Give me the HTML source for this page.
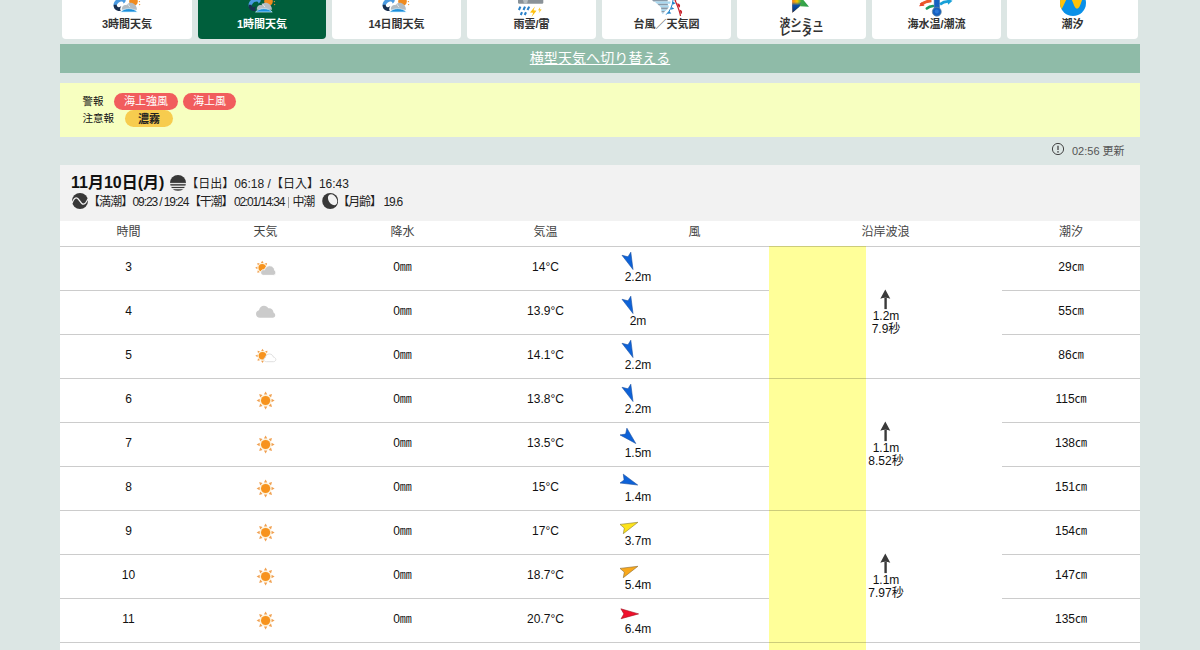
<!DOCTYPE html>
<html lang="ja"><head><meta charset="utf-8"><title>1時間天気</title>
<style>
*{margin:0;padding:0;box-sizing:border-box}
html,body{width:1200px;height:650px;overflow:hidden}
body{background:#dce6e4;font-family:"Liberation Sans", "Noto Sans CJK JP", sans-serif;font-size:12px;color:#111;position:relative}
.abs{position:absolute}
.tab{position:absolute;top:-20px;height:58.5px;background:#fff;border-radius:4px}
.tab.on{background:#005f3c}
.tab .lb{position:absolute;left:0;right:0;top:37px;text-align:center;font-weight:bold;font-size:11px;line-height:14px;color:#333;white-space:nowrap}
.tab.on .lb{color:#fff}
.tab svg{position:absolute;top:10px;left:50%;margin-left:-15px}
#sw{left:60px;top:44px;width:1080px;height:28.8px;background:#8fbba8;text-align:center;line-height:28px;font-size:14px;color:#fff;letter-spacing:.1px}
#sw span{text-decoration:underline}
#al{left:60px;top:83px;width:1080px;height:53.5px;background:#f7ffc0;font-size:11px}
.pill{position:absolute;height:16.700px;border-radius:9px;line-height:17px;text-align:center;font-size:11px;color:#fff;background:#f15d5d}
#upd{font-size:11px;color:#555;white-space:nowrap}
#hdbg{left:60px;top:164.6px;width:1080px;height:56px;background:#f2f2f2}
#hd{left:60px;top:165px;width:1080px;height:56px}
#tb{left:60px;top:220.6px;width:1080px;height:430px;background:#fff}
.hl{position:absolute;height:1px;background:rgba(0,0,0,.2)}
.c{position:absolute;text-align:center;white-space:nowrap;line-height:14px;height:14px}
.th{color:#444}
.yb{position:absolute;left:769px;width:97px;background:#ffff99}
</style></head>
<body>
<div class="tab" style="left:62px;width:130px"><div class="lb">3時間天気</div></div>
<div class="tab on" style="left:198px;width:128px"><div class="lb">1時間天気</div></div>
<div class="tab" style="left:332px;width:129px"><div class="lb">14日間天気</div></div>
<div class="tab" style="left:467px;width:129px"><div class="lb">雨雲/雷</div></div>
<div class="tab" style="left:602px;width:129px"><div class="lb">台風／天気図</div></div>
<div class="tab" style="left:737px;width:129px"><div class="lb" style="top:38.700px;line-height:9px">波シミュ<br>レーター</div></div>
<div class="tab" style="left:872px;width:129px"><div class="lb">海水温/潮流</div></div>
<div class="tab" style="left:1007px;width:131px"><div class="lb">潮汐</div></div>
<svg class="abs" style="left:110.0px;top:0" width="32" height="14" viewBox="110 0 32 14"><circle cx="133.5" cy="1.4" r="4.3" fill="#f08a1e"/><circle cx="139.4" cy="1.6" r=".7" fill="#f0902a"/><circle cx="139.6" cy="4.6" r=".7" fill="#f0902a"/><path d="M113.700 6.500C113 3 115 .3 117.500 -1L125.700 -1C126 1.500 125 3 123.200 3.500 123.600 2.400 123 1.600 122 1.500 119.500 1.500 117 3 116.600 6.500Z" fill="#4a9ae0"/><path d="M113.700 4.800C113.200 9 116.500 11.600 120.900 11 119.800 9.600 120 8 121.300 6 119 8 116.900 7.600 116.600 4.800Z" fill="#1a3050"/><path d="M121.800 9.800C121.500 6.500 124 4.600 126.300 5.200 127.500 3 130 2.200 132.300 3 135 4 137 6.500 137 9.800Z" fill="#b4bcc2"/><path d="M127.200 3.400L130 7.200" stroke="#fff" stroke-width=".6"/><path d="M120.600 12C124 7.700 133.500 7.400 137.200 12Z" fill="#1a8fdc" stroke="#d4efff" stroke-width=".7"/></svg>
<svg class="abs" style="left:245.0px;top:0" width="32" height="14" viewBox="110 0 32 14"><circle cx="133.5" cy="1.4" r="4.3" fill="#f08a1e"/><circle cx="139.4" cy="1.6" r=".7" fill="#f0902a"/><circle cx="139.6" cy="4.6" r=".7" fill="#f0902a"/><path d="M113.700 6.500C113 3 115 .3 117.500 -1L125.700 -1C126 1.500 125 3 123.200 3.500 123.600 2.400 123 1.600 122 1.500 119.500 1.500 117 3 116.600 6.500Z" fill="#4a9ae0"/><path d="M113.700 4.800C113.200 9 116.500 11.600 120.900 11 119.800 9.600 120 8 121.300 6 119 8 116.900 7.600 116.600 4.800Z" fill="#1a3050"/><path d="M121.800 9.800C121.500 6.500 124 4.600 126.300 5.200 127.500 3 130 2.200 132.300 3 135 4 137 6.500 137 9.800Z" fill="#b4bcc2"/><path d="M127.200 3.400L130 7.200" stroke="#fff" stroke-width=".6"/><path d="M120.600 12C124 7.700 133.500 7.400 137.200 12Z" fill="#1a8fdc" stroke="#d4efff" stroke-width=".7"/></svg>
<svg class="abs" style="left:378.5px;top:0" width="32" height="14" viewBox="110 0 32 14"><circle cx="133.5" cy="1.4" r="4.3" fill="#f08a1e"/><circle cx="139.4" cy="1.6" r=".7" fill="#f0902a"/><circle cx="139.6" cy="4.6" r=".7" fill="#f0902a"/><path d="M113.700 6.500C113 3 115 .3 117.500 -1L125.700 -1C126 1.500 125 3 123.200 3.500 123.600 2.400 123 1.600 122 1.500 119.500 1.500 117 3 116.600 6.500Z" fill="#4a9ae0"/><path d="M113.700 4.800C113.200 9 116.500 11.600 120.900 11 119.800 9.600 120 8 121.300 6 119 8 116.900 7.600 116.600 4.800Z" fill="#1a3050"/><path d="M121.800 9.800C121.500 6.500 124 4.600 126.300 5.200 127.500 3 130 2.200 132.300 3 135 4 137 6.500 137 9.800Z" fill="#b4bcc2"/><path d="M127.200 3.400L130 7.200" stroke="#fff" stroke-width=".6"/><path d="M120.600 12C124 7.700 133.500 7.400 137.200 12Z" fill="#1a8fdc" stroke="#d4efff" stroke-width=".7"/></svg>
<svg class="abs" style="left:516px;top:0" width="30" height="17" viewBox="516 0 30 17"><path d="M518 0H543.300V2.600Q543.300 3.800 542.100 3.800H519.200Q518 3.800 518 2.600Z" fill="#8a9298"/><path d="M523 0h5l-1 3.800h-3z" fill="#b4bcc0"/><path d="M520.400 6.600l-1.500 3.400M525 6.600l-1.500 3.400M529.200 6.600l-1.700 3.400M522 12.200l-1.200 2.800M526 12.200l-1.300 2.800" stroke="#2a80c8" stroke-width="2.100"/><path d="M535 6.500l-5 6 3.200.3-1.700 4.200 5-6.300-3-.4z" fill="#ffc20e"/><path d="M540.300 7l-2.300 3.200 1.700.2-1.200 3.200 3.200-4.100-1.800-.2z" fill="#f8c830"/></svg>
<svg class="abs" style="left:650px;top:0" width="36" height="17" viewBox="650 0 36 17"><path d="M652 0H667.700L667.700 1.500H653.500Z" fill="#8a9aa8"/><path d="M654.500 1.500H670.700L670 3.700H657Z" fill="#a8d8f0"/><path d="M657.200 3.700H667.700L668 5.600H659Z" fill="#8a9aa8"/><path d="M659.300 5.600H669L668.600 7.500H660.800Z" fill="#a8d8f0"/><path d="M661 7.500H668.500L667 9.400H661.300Z" fill="#8a9aa8"/><path d="M661.300 9.400H667L665.500 11H661.400Z" fill="#a8d8f0"/><path d="M661.400 11H665L664 12.400H661.700Z" fill="#8a9aa8"/><path d="M661.700 12.400H664L662.800 14.300Z" fill="#a8d8f0"/><path d="M673 0C672.500 6 670 11 666.200 14.600" stroke="#1e82c8" stroke-width="1" fill="none"/><path d="M673 1.800L675.700 3.300 672.600 4.800ZM671.700 6.900L674.300 8.700 670.700 9.800ZM669.200 11L671.300 13.500 667.200 13.800Z" fill="#1e82c8"/><path d="M674.900 0C677 5 679.500 10 680.500 16" stroke="#c8202a" stroke-width="1.200" fill="none"/><path d="M677 3.600A2.300 2.300 0 0 1 679 7.700ZM679.700 9.800A2.300 2.300 0 0 1 680.700 14.200ZM674.200 -2A2.300 2.300 0 0 1 675.800 1.500Z" fill="#c8202a"/></svg>
<svg class="abs" style="left:788px;top:0" width="26" height="15" viewBox="788 0 26 15"><defs><linearGradient id="gw" gradientUnits="userSpaceOnUse" x1="792" y1="0" x2="809" y2="0"><stop offset="0" stop-color="#f07818"/><stop offset=".3" stop-color="#f5c800"/><stop offset=".55" stop-color="#3aa848"/><stop offset="1" stop-color="#2a9a48"/></linearGradient><linearGradient id="gb" gradientUnits="userSpaceOnUse" x1="0" y1="2" x2="0" y2="13"><stop offset="0" stop-color="#0a50a8" stop-opacity="0"/><stop offset=".3" stop-color="#0a50a8"/><stop offset="1" stop-color="#062a68"/></linearGradient><clipPath id="cw"><path d="M792.100 0L792.400 12.800 800 6.300 809 6.800 803.400 0Z"/></clipPath></defs><path d="M792.100 0L792.400 12.800 800 6.300 809 6.800 803.400 0Z" fill="url(#gw)"/><path d="M788 2H801.500L797 13H788Z" fill="url(#gb)" clip-path="url(#cw)"/></svg>
<svg class="abs" style="left:916px;top:0" width="40" height="17" viewBox="916 0 40 17"><path d="M931.500 .8C927 1 923.500 2.600 920.600 4.800" stroke="#ee5a2a" stroke-width="3" fill="none"/><path d="M919 6.200l5.500-.4-3-3.500z" fill="#e8482a"/><path d="M933 6C930.500 6.200 928.500 7 926.800 8.400" stroke="#1a9a60" stroke-width="2.600" fill="none" stroke-linecap="round"/><path d="M940 4.300C943 2 946 1.300 949 1.500" stroke="#18a0d8" stroke-width="2.800" fill="none"/><path d="M947.500 -1l5 1.700-4.500 4z" fill="#18a0d8"/><path d="M934.2 -2V9M939.5 -2V9" stroke="#6a8a98" stroke-width=".6"/><rect x="934.2" y="-2" width="5.3" height="12" fill="#1460c0"/><circle cx="936.800" cy="11.700" r="4.500" fill="#1460c0" stroke="#6a8a98" stroke-width=".7"/><circle cx="936.800" cy="11.500" r="2" fill="#2a78d8"/></svg>
<svg class="abs" style="left:1058px;top:0" width="30" height="17" viewBox="1058 0 30 17"><defs><clipPath id="ct"><circle cx="1073" cy="3" r="13"/></clipPath></defs><circle cx="1073" cy="3" r="13" fill="#0a90e8"/><path d="M1058 -10V14C1063.500 9 1065.500 -2 1069 -3.500 1072.800 -2 1073.600 8.600 1077 8.600 1080.600 8.600 1081.200 -1 1084.400 -4V-10Z" fill="#ffc20a" clip-path="url(#ct)"/></svg>
<div id="sw" class="abs"><span>横型天気へ切り替える</span></div>
<div id="al" class="abs">
<div class="abs" style="left:22.500px;top:10.600px;line-height:14px;font-size:10.500px">警報</div>
<div class="pill" style="left:54px;top:10px;width:64px">海上強風</div>
<div class="pill" style="left:123px;top:10px;width:53px">海上風</div>
<div class="abs" style="left:22.500px;top:28px;line-height:14px;font-size:10.500px">注意報</div>
<div class="pill" style="left:65px;top:27.200px;width:48px;height:16.500px;background:#f7cc4e;color:#222;font-weight:bold;line-height:18.500px">濃霧</div>
</div>
<svg class="abs" style="left:1051px;top:142px" width="14" height="14" viewBox="0 0 14 14"><circle cx="7" cy="7" r="5.6" fill="none" stroke="#444" stroke-width="1"/><path d="M7 3.8v4.2" stroke="#444" stroke-width="1.3"/><circle cx="7" cy="9.9" r=".8" fill="#444"/></svg>
<div id="upd" class="abs" style="left:1072px;top:144px;line-height:14px">02:56 更新</div>
<div id="hdbg" class="abs"></div>
<div id="hd" class="abs">
<div class="abs" style="left:11px;top:8px;font-size:16px;font-weight:bold;line-height:20px;white-space:nowrap;color:#111">11月10日(月)</div>
<svg class="abs" style="left:110px;top:10px" width="16" height="16" viewBox="0 0 16 16"><defs><clipPath id="cs"><circle cx="8" cy="8" r="8"/></clipPath></defs><g clip-path="url(#cs)"><rect x="0" y="0" width="16" height="7.900" fill="#383838"/><rect x="0" y="8.900" width="16" height="1.800" fill="#555"/><rect x="0" y="11.900" width="16" height="1.100" fill="#383838"/><rect x="0" y="13.900" width="16" height="2.100" fill="#666"/></g></svg>
<div class="abs" style="left:126.2px;top:11px;line-height:16px;white-space:nowrap;color:#222">【日出】06:18 /【日入】16:43</div>
<svg class="abs" style="left:12px;top:28px" width="16" height="16" viewBox="0 0 16 16"><circle cx="8" cy="8" r="8" fill="#383838"/><path d="M0 10.200C1.500 6 3 4.800 4.500 4.800 7 4.800 8.500 11.200 11.300 11.200 13.500 11.200 14.500 9 16 5.800" fill="none" stroke="#f2f2f2" stroke-width="1.300"/></svg>
<div class="abs" style="left:28px;top:29px;line-height:16px;white-space:nowrap;letter-spacing:-1.2px;color:#222;letter-spacing:-.900px">【満潮】</div>
<div class="abs" style="left:72.500px;top:29px;line-height:16px;white-space:nowrap;letter-spacing:-1.2px;color:#222;letter-spacing:-1.100px">09:23 / 19:24</div>
<div class="abs" style="left:129px;top:29px;line-height:16px;white-space:nowrap;letter-spacing:-1.2px;color:#222">【干潮】</div>
<div class="abs" style="left:174px;top:29px;line-height:16px;white-space:nowrap;letter-spacing:-1.2px;color:#222">02:01/14:34</div>
<div class="abs" style="left:228.200px;top:32px;width:1.300px;height:10.500px;background:#a4a4a4"></div>
<div class="abs" style="left:232.500px;top:29px;line-height:16px;white-space:nowrap;letter-spacing:-1.2px;color:#222">中潮</div>
<svg class="abs" style="left:262px;top:28px" width="16.400" height="16" viewBox="0 0 16.400 16"><circle cx="8.200" cy="8" r="8" fill="#383838"/><ellipse cx="10.600" cy="6.700" rx="4" ry="6" transform="rotate(-33 10.600 6.700)" fill="#f2f2f2"/></svg>
<div class="abs" style="left:277.500px;top:29px;line-height:16px;white-space:nowrap;letter-spacing:-1.2px;color:#222">【月齢】</div>
<div class="abs" style="left:323.500px;top:29px;line-height:16px;white-space:nowrap;letter-spacing:-1.2px;color:#222">19.6</div>
</div>
<div id="tb" class="abs"></div>
<div class="c th" style="left:60px;width:137px;top:225px">時間</div>
<div class="c th" style="left:197px;width:137px;top:225px">天気</div>
<div class="c th" style="left:334px;width:137px;top:225px">降水</div>
<div class="c th" style="left:471px;width:149px;top:225px">気温</div>
<div class="c th" style="left:620px;width:149px;top:225px">風</div>
<div class="c th" style="left:769px;width:233px;top:225px">沿岸波浪</div>
<div class="c th" style="left:1002px;width:138px;top:225px">潮汐</div>
<div class="yb" style="top:246px;height:404px"></div>
<div class="hl" style="left:60px;top:246px;width:1080px"></div>
<div class="c" style="left:60px;width:137px;top:260px">3</div>
<svg class="abs" style="left:245px;top:254px" width="40" height="36" viewBox="0 0 40 36"><circle cx="17.2" cy="13.8" r="4.7" fill="#fdf0d2"/><circle cx="17.2" cy="13.8" r="3.7" fill="#f7931e"/><path d="M17.2 6.8L18.6 9.0L15.8 9.0z" fill="#f0a050"/><path d="M22.1 8.9L21.6 11.4L19.6 9.4z" fill="#f0a050"/><path d="M24.2 13.8L22.0 15.2L22.0 12.4z" fill="#f0a050"/><path d="M22.1 18.7L19.6 18.2L21.6 16.2z" fill="#f0a050"/><path d="M17.2 20.8L15.8 18.6L18.6 18.6z" fill="#f0a050"/><path d="M12.3 18.7L12.8 16.2L14.8 18.2z" fill="#f0a050"/><path d="M10.2 13.8L12.4 12.4L12.4 15.2z" fill="#f0a050"/><path d="M12.3 8.9L14.8 9.4L12.8 11.4z" fill="#f0a050"/><path transform="translate(15.7,11.7) scale(1,1.05)" d="M3 9.2C1.2 9.2 0 8 0 6.5 0 5 1.2 3.8 2.8 3.8 3.2 3.8 3.5 3.85 3.8 3.95 4.4 1.7 6.4 0 8.9 0 11.6 0 13.7 1.9 14 4.4 14.7 4.9 15.1 5.7 15.1 6.6 15.1 8 14 9.2 12.5 9.2Z" fill="#c9c9c9" stroke="#fff" stroke-width=".9"/></svg>
<div class="c" style="left:334px;width:137px;top:260px">0㎜</div>
<div class="c" style="left:471px;width:149px;top:260px">14°C</div>
<svg class="abs" style="left:614px;top:246px" width="32" height="28" viewBox="614 0 32 28"><polygon points="622.0,9.3 628.0,10.8 630.8,6.2 633.0,23.5" fill="#0d62d8" stroke="#1a4fa0" stroke-width=".6" stroke-linejoin="round"/></svg>
<div class="c" style="left:608px;width:60px;top:270px">2.2m</div>
<div class="c" style="left:1002px;width:138px;top:260px">29㎝</div>
<div class="hl" style="left:60px;top:290px;width:709px"></div>
<div class="hl" style="left:1002px;top:290px;width:138px"></div>
<div class="c" style="left:60px;width:137px;top:304px">4</div>
<svg class="abs" style="left:245px;top:294px" width="40" height="36" viewBox="0 0 40 36"><path transform="translate(11,11.7) scale(.93,1)" d="M4.2 12C1.9 12 0 10.3 0 8.2 0 6.3 1.4 4.8 3.2 4.5 3.7 1.9 5.9 0 8.6 0c2 0 3.700 1 4.700 2.600.3-.1.700-.1 1-.1 2.400 0 4.400 1.900 4.500 4.300C20 7.400 20.700 8.400 20.700 9.500c0 1.400-1.200 2.500-2.600 2.500z" fill="#cbcbcb"/></svg>
<div class="c" style="left:334px;width:137px;top:304px">0㎜</div>
<div class="c" style="left:471px;width:149px;top:304px">13.9°C</div>
<svg class="abs" style="left:614px;top:290px" width="32" height="28" viewBox="614 0 32 28"><polygon points="622.0,9.3 628.0,10.8 630.8,6.2 633.0,23.5" fill="#0d62d8" stroke="#1a4fa0" stroke-width=".6" stroke-linejoin="round"/></svg>
<div class="c" style="left:608px;width:60px;top:314px">2m</div>
<div class="c" style="left:1002px;width:138px;top:304px">55㎝</div>
<div class="hl" style="left:60px;top:334px;width:709px"></div>
<div class="hl" style="left:1002px;top:334px;width:138px"></div>
<div class="c" style="left:60px;width:137px;top:348px">5</div>
<svg class="abs" style="left:245px;top:342px" width="40" height="36" viewBox="0 0 40 36"><circle cx="17.5" cy="13.8" r="4.8" fill="#fdf0d2"/><circle cx="17.5" cy="13.8" r="3.8" fill="#f7931e"/><path d="M17.5 6.7L18.9 8.9L16.1 8.9z" fill="#f0a050"/><path d="M22.5 8.8L22.0 11.3L20.0 9.3z" fill="#f0a050"/><path d="M24.6 13.8L22.4 15.2L22.4 12.4z" fill="#f0a050"/><path d="M22.5 18.8L20.0 18.3L22.0 16.3z" fill="#f0a050"/><path d="M17.5 20.9L16.1 18.7L18.9 18.7z" fill="#f0a050"/><path d="M12.5 18.8L13.0 16.3L15.0 18.3z" fill="#f0a050"/><path d="M10.4 13.8L12.6 12.4L12.6 15.2z" fill="#f0a050"/><path d="M12.5 8.8L15.0 9.3L13.0 11.3z" fill="#f0a050"/><path transform="translate(18.8,12)" d="M2.5 7.7C1 7.7 0 6.8 0 5.6 0 4.6 .7 3.8 1.6 3.5 1.8 1.5 3.5 0 5.6 0 7.6 0 9.2 1.3 9.6 3.1 11 3.3 12 4.3 12 5.5 12 6.7 11 7.7 9.7 7.7Z" fill="#fff" stroke="#dcdcdc" stroke-width=".9"/></svg>
<div class="c" style="left:334px;width:137px;top:348px">0㎜</div>
<div class="c" style="left:471px;width:149px;top:348px">14.1°C</div>
<svg class="abs" style="left:614px;top:334px" width="32" height="28" viewBox="614 0 32 28"><polygon points="622.0,9.3 628.0,10.8 630.8,6.2 633.0,23.5" fill="#0d62d8" stroke="#1a4fa0" stroke-width=".6" stroke-linejoin="round"/></svg>
<div class="c" style="left:608px;width:60px;top:358px">2.2m</div>
<div class="c" style="left:1002px;width:138px;top:348px">86㎝</div>
<div class="hl" style="left:60px;top:378px;width:1080px"></div>
<div class="c" style="left:60px;width:137px;top:392px">6</div>
<svg class="abs" style="left:245px;top:382px" width="40" height="36" viewBox="0 0 40 36"><circle cx="20.6" cy="18.5" r="5.6" fill="#fdf0d2"/><circle cx="20.6" cy="18.5" r="4.6" fill="#f7931e"/><path d="M20.6 9.5L22.3 12.6L18.9 12.6z" fill="#f0a050"/><path d="M27.0 12.1L26.0 15.5L23.6 13.1z" fill="#f0a050"/><path d="M29.6 18.5L26.5 20.2L26.5 16.8z" fill="#f0a050"/><path d="M27.0 24.9L23.6 23.9L26.0 21.5z" fill="#f0a050"/><path d="M20.6 27.5L18.9 24.4L22.3 24.4z" fill="#f0a050"/><path d="M14.2 24.9L15.2 21.5L17.6 23.9z" fill="#f0a050"/><path d="M11.6 18.5L14.7 16.8L14.7 20.2z" fill="#f0a050"/><path d="M14.2 12.1L17.6 13.1L15.2 15.5z" fill="#f0a050"/></svg>
<div class="c" style="left:334px;width:137px;top:392px">0㎜</div>
<div class="c" style="left:471px;width:149px;top:392px">13.8°C</div>
<svg class="abs" style="left:614px;top:378px" width="32" height="28" viewBox="614 0 32 28"><polygon points="622.0,9.3 628.0,10.8 630.8,6.2 633.0,23.5" fill="#0d62d8" stroke="#1a4fa0" stroke-width=".6" stroke-linejoin="round"/></svg>
<div class="c" style="left:608px;width:60px;top:402px">2.2m</div>
<div class="c" style="left:1002px;width:138px;top:392px">115㎝</div>
<div class="hl" style="left:60px;top:422px;width:709px"></div>
<div class="hl" style="left:1002px;top:422px;width:138px"></div>
<div class="c" style="left:60px;width:137px;top:436px">7</div>
<svg class="abs" style="left:245px;top:426px" width="40" height="36" viewBox="0 0 40 36"><circle cx="20.6" cy="18.5" r="5.6" fill="#fdf0d2"/><circle cx="20.6" cy="18.5" r="4.6" fill="#f7931e"/><path d="M20.6 9.5L22.3 12.6L18.9 12.6z" fill="#f0a050"/><path d="M27.0 12.1L26.0 15.5L23.6 13.1z" fill="#f0a050"/><path d="M29.6 18.5L26.5 20.2L26.5 16.8z" fill="#f0a050"/><path d="M27.0 24.9L23.6 23.9L26.0 21.5z" fill="#f0a050"/><path d="M20.6 27.5L18.9 24.4L22.3 24.4z" fill="#f0a050"/><path d="M14.2 24.9L15.2 21.5L17.6 23.9z" fill="#f0a050"/><path d="M11.6 18.5L14.7 16.8L14.7 20.2z" fill="#f0a050"/><path d="M14.2 12.1L17.6 13.1L15.2 15.5z" fill="#f0a050"/></svg>
<div class="c" style="left:334px;width:137px;top:436px">0㎜</div>
<div class="c" style="left:471px;width:149px;top:436px">13.5°C</div>
<svg class="abs" style="left:614px;top:422px" width="32" height="28" viewBox="614 0 32 28"><polygon points="620.0,12.9 625.6,12.1 626.9,6.2 635.8,21.5" fill="#0d62d8" stroke="#1a4fa0" stroke-width=".6" stroke-linejoin="round"/></svg>
<div class="c" style="left:608px;width:60px;top:446px">1.5m</div>
<div class="c" style="left:1002px;width:138px;top:436px">138㎝</div>
<div class="hl" style="left:60px;top:466px;width:709px"></div>
<div class="hl" style="left:1002px;top:466px;width:138px"></div>
<div class="c" style="left:60px;width:137px;top:480px">8</div>
<svg class="abs" style="left:245px;top:470px" width="40" height="36" viewBox="0 0 40 36"><circle cx="20.6" cy="18.5" r="5.6" fill="#fdf0d2"/><circle cx="20.6" cy="18.5" r="4.6" fill="#f7931e"/><path d="M20.6 9.5L22.3 12.6L18.9 12.6z" fill="#f0a050"/><path d="M27.0 12.1L26.0 15.5L23.6 13.1z" fill="#f0a050"/><path d="M29.6 18.5L26.5 20.2L26.5 16.8z" fill="#f0a050"/><path d="M27.0 24.9L23.6 23.9L26.0 21.5z" fill="#f0a050"/><path d="M20.6 27.5L18.9 24.4L22.3 24.4z" fill="#f0a050"/><path d="M14.2 24.9L15.2 21.5L17.6 23.9z" fill="#f0a050"/><path d="M11.6 18.5L14.7 16.8L14.7 20.2z" fill="#f0a050"/><path d="M14.2 12.1L17.6 13.1L15.2 15.5z" fill="#f0a050"/></svg>
<div class="c" style="left:334px;width:137px;top:480px">0㎜</div>
<div class="c" style="left:471px;width:149px;top:480px">15°C</div>
<svg class="abs" style="left:614px;top:466px" width="32" height="28" viewBox="614 0 32 28"><polygon points="620.0,17.0 624.1,14.0 623.3,8.2 637.7,19.0" fill="#0d62d8" stroke="#1a4fa0" stroke-width=".6" stroke-linejoin="round"/></svg>
<div class="c" style="left:608px;width:60px;top:490px">1.4m</div>
<div class="c" style="left:1002px;width:138px;top:480px">151㎝</div>
<div class="hl" style="left:60px;top:510px;width:1080px"></div>
<div class="c" style="left:60px;width:137px;top:524px">9</div>
<svg class="abs" style="left:245px;top:514px" width="40" height="36" viewBox="0 0 40 36"><circle cx="20.6" cy="18.5" r="5.6" fill="#fdf0d2"/><circle cx="20.6" cy="18.5" r="4.6" fill="#f7931e"/><path d="M20.6 9.5L22.3 12.6L18.9 12.6z" fill="#f0a050"/><path d="M27.0 12.1L26.0 15.5L23.6 13.1z" fill="#f0a050"/><path d="M29.6 18.5L26.5 20.2L26.5 16.8z" fill="#f0a050"/><path d="M27.0 24.9L23.6 23.9L26.0 21.5z" fill="#f0a050"/><path d="M20.6 27.5L18.9 24.4L22.3 24.4z" fill="#f0a050"/><path d="M14.2 24.9L15.2 21.5L17.6 23.9z" fill="#f0a050"/><path d="M11.6 18.5L14.7 16.8L14.7 20.2z" fill="#f0a050"/><path d="M14.2 12.1L17.6 13.1L15.2 15.5z" fill="#f0a050"/></svg>
<div class="c" style="left:334px;width:137px;top:524px">0㎜</div>
<div class="c" style="left:471px;width:149px;top:524px">17°C</div>
<svg class="abs" style="left:614px;top:510px" width="32" height="28" viewBox="614 0 32 28"><polygon points="620.0,14.4 624.3,18.1 623.3,23.7 637.9,12.3" fill="#fde41a" stroke="#8a7a30" stroke-width=".6" stroke-linejoin="round"/></svg>
<div class="c" style="left:608px;width:60px;top:534px">3.7m</div>
<div class="c" style="left:1002px;width:138px;top:524px">154㎝</div>
<div class="hl" style="left:60px;top:554px;width:709px"></div>
<div class="hl" style="left:1002px;top:554px;width:138px"></div>
<div class="c" style="left:60px;width:137px;top:568px">10</div>
<svg class="abs" style="left:245px;top:558px" width="40" height="36" viewBox="0 0 40 36"><circle cx="20.6" cy="18.5" r="5.6" fill="#fdf0d2"/><circle cx="20.6" cy="18.5" r="4.6" fill="#f7931e"/><path d="M20.6 9.5L22.3 12.6L18.9 12.6z" fill="#f0a050"/><path d="M27.0 12.1L26.0 15.5L23.6 13.1z" fill="#f0a050"/><path d="M29.6 18.5L26.5 20.2L26.5 16.8z" fill="#f0a050"/><path d="M27.0 24.9L23.6 23.9L26.0 21.5z" fill="#f0a050"/><path d="M20.6 27.5L18.9 24.4L22.3 24.4z" fill="#f0a050"/><path d="M14.2 24.9L15.2 21.5L17.6 23.9z" fill="#f0a050"/><path d="M11.6 18.5L14.7 16.8L14.7 20.2z" fill="#f0a050"/><path d="M14.2 12.1L17.6 13.1L15.2 15.5z" fill="#f0a050"/></svg>
<div class="c" style="left:334px;width:137px;top:568px">0㎜</div>
<div class="c" style="left:471px;width:149px;top:568px">18.7°C</div>
<svg class="abs" style="left:614px;top:554px" width="32" height="28" viewBox="614 0 32 28"><polygon points="620.0,14.4 624.3,18.1 623.3,23.7 637.9,12.3" fill="#f8a81c" stroke="#8a6a30" stroke-width=".6" stroke-linejoin="round"/></svg>
<div class="c" style="left:608px;width:60px;top:578px">5.4m</div>
<div class="c" style="left:1002px;width:138px;top:568px">147㎝</div>
<div class="hl" style="left:60px;top:598px;width:709px"></div>
<div class="hl" style="left:1002px;top:598px;width:138px"></div>
<div class="c" style="left:60px;width:137px;top:612px">11</div>
<svg class="abs" style="left:245px;top:602px" width="40" height="36" viewBox="0 0 40 36"><circle cx="20.6" cy="18.5" r="5.6" fill="#fdf0d2"/><circle cx="20.6" cy="18.5" r="4.6" fill="#f7931e"/><path d="M20.6 9.5L22.3 12.6L18.9 12.6z" fill="#f0a050"/><path d="M27.0 12.1L26.0 15.5L23.6 13.1z" fill="#f0a050"/><path d="M29.6 18.5L26.5 20.2L26.5 16.8z" fill="#f0a050"/><path d="M27.0 24.9L23.6 23.9L26.0 21.5z" fill="#f0a050"/><path d="M20.6 27.5L18.9 24.4L22.3 24.4z" fill="#f0a050"/><path d="M14.2 24.9L15.2 21.5L17.6 23.9z" fill="#f0a050"/><path d="M11.6 18.5L14.7 16.8L14.7 20.2z" fill="#f0a050"/><path d="M14.2 12.1L17.6 13.1L15.2 15.5z" fill="#f0a050"/></svg>
<div class="c" style="left:334px;width:137px;top:612px">0㎜</div>
<div class="c" style="left:471px;width:149px;top:612px">20.7°C</div>
<svg class="abs" style="left:614px;top:598px" width="32" height="28" viewBox="614 0 32 28"><polygon points="620.9,10.8 623.9,15.9 621.1,20.7 638.6,15.9" fill="#f0102c" stroke="#a01020" stroke-width=".6" stroke-linejoin="round"/></svg>
<div class="c" style="left:608px;width:60px;top:622px">6.4m</div>
<div class="c" style="left:1002px;width:138px;top:612px">135㎝</div>
<div class="hl" style="left:60px;top:642px;width:1080px"></div>
<svg class="abs" style="left:877px;top:288px" width="16" height="22" viewBox="877 288 16 22"><path d="M885.600 298v11.100" stroke="#3a3a3a" stroke-width="2.400" fill="none"/><path d="M885.300 289.500L890.300 298.700Q885.300 297 880.300 298.700Z" fill="#3a3a3a"/></svg>
<div class="c" style="left:836px;width:100px;top:310px;line-height:13px;height:26px">1.2m<br>7.9秒</div>
<svg class="abs" style="left:877px;top:420px" width="16" height="22" viewBox="877 288 16 22"><path d="M885.600 298v11.100" stroke="#3a3a3a" stroke-width="2.400" fill="none"/><path d="M885.300 289.500L890.300 298.700Q885.300 297 880.300 298.700Z" fill="#3a3a3a"/></svg>
<div class="c" style="left:836px;width:100px;top:442px;line-height:13px;height:26px">1.1m<br>8.52秒</div>
<svg class="abs" style="left:877px;top:552px" width="16" height="22" viewBox="877 288 16 22"><path d="M885.600 298v11.100" stroke="#3a3a3a" stroke-width="2.400" fill="none"/><path d="M885.300 289.500L890.300 298.700Q885.300 297 880.300 298.700Z" fill="#3a3a3a"/></svg>
<div class="c" style="left:836px;width:100px;top:574px;line-height:13px;height:26px">1.1m<br>7.97秒</div>
</body></html>
